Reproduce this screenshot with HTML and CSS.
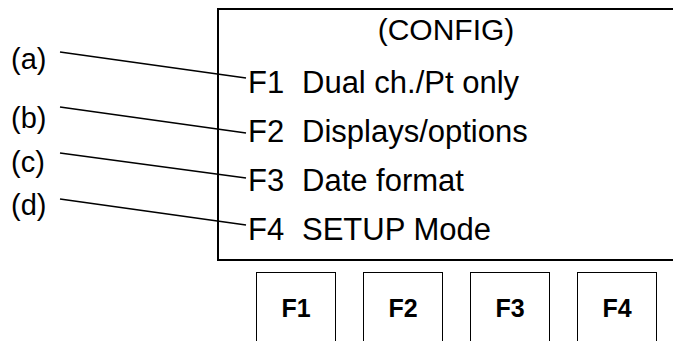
FILE: index.html
```html
<!DOCTYPE html>
<html lang="en">
<head>
    <meta charset="UTF-8" />
    <title>CONFIG menu</title>
    <link rel="stylesheet" href="styles.css">
</head>
<body>
<div class="figure">
    <div class="callouts">
        <div class="callout a">(a)</div>
        <div class="callout b">(b)</div>
        <div class="callout c">(c)</div>
        <div class="callout d">(d)</div>
    </div>

    <div class="unit">
        <div class="screen">
            <div class="title">(CONFIG)</div>
            <div class="menu">
                <span class="key">F1</span><span>Dual ch./Pt only</span>
                <span class="key">F2</span><span>Displays/options</span>
                <span class="key">F3</span><span>Date format</span>
                <span class="key">F4</span><span>SETUP Mode</span>
            </div>
        </div>
        <div class="keys">
            <div class="fkey">F1</div>
            <div class="fkey">F2</div>
            <div class="fkey">F3</div>
            <div class="fkey">F4</div>
        </div>
    </div>

    <!-- leader lines from the labels to the menu rows -->
    <svg class="leaders" width="673" height="341" viewBox="0 0 673 341">
        <line x1="60" y1="52" x2="246" y2="78" />
        <line x1="60" y1="107" x2="246" y2="133" />
        <line x1="60" y1="153" x2="246" y2="178" />
        <line x1="60" y1="199" x2="246" y2="225" />
    </svg>
</div>
</body>
</html>
```

FILE: styles.css
```css
body {
    margin: 0;
    font-family: "Liberation Sans", Arial, sans-serif;
    color: #000;
    background: #fff;
}
.figure {
    position: relative;
    display: flex;
    height: 341px;
    padding-top: 8px;
    box-sizing: border-box;
    overflow: hidden;
}
.callouts {
    width: 217px;
    flex-shrink: 0;
    display: flex;
    flex-direction: column;
    padding-left: 11px;
    box-sizing: border-box;
}
.callout {
    font-size: 29px;
    line-height: 32px;
}
.callout.a { margin-top: 35px; }
.callout.b { margin-top: 27px; }
.callout.c { margin-top: 12px; }
.callout.d { margin-top: 11px; }

.unit {
    flex: 1;
}
.screen {
    height: 253px;
    box-sizing: border-box;
    border: 2px solid #000;
    border-right: none;
}
.title {
    text-align: center;
    font-size: 30px;
    line-height: 40px;
    margin-bottom: 8px;
}
.menu {
    display: grid;
    grid-template-columns: 54px auto;
    padding-left: 29px;
    font-size: 31px;
    line-height: 49px;
}
.keys {
    display: flex;
    gap: 27px;
    margin-top: 11px;
    padding-left: 39px;
}
.fkey {
    width: 80px;
    height: 80px;
    box-sizing: border-box;
    border: 1px solid #000;
    border-bottom: none;
    font-weight: bold;
    font-size: 25px;
    line-height: 70px;
    text-align: center;
}
.leaders {
    position: absolute;
    left: 0;
    top: 0;
    pointer-events: none;
}
.leaders line {
    stroke: #000;
    stroke-width: 1.6;
}
```
